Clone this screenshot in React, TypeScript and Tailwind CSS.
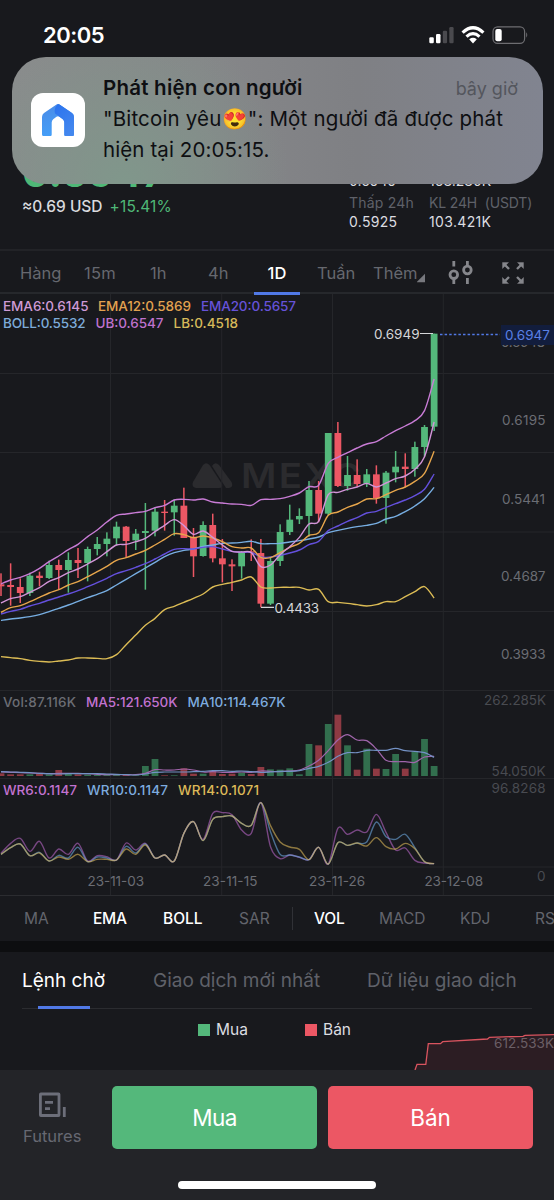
import React from 'react';
import clsx from 'clsx';

// [direction, high, body top, body bottom, low], in thirds of a pixel below y = 450
type Candle = ['u' | 'd', number, number, number, number];

const candles: Candle[] = [
  ['d', 370, 403, 409, 438],
  ['d', 340, 405, 411, 467],
  ['d', 385, 411, 429, 459],
  ['u', 368, 377, 429, 438],
  ['d', 365, 377, 384, 409],
  ['u', 332, 345, 384, 387],
  ['d', 329, 345, 360, 417],
  ['u', 307, 330, 360, 428],
  ['d', 294, 330, 339, 384],
  ['u', 290, 297, 339, 394],
  ['u', 261, 282, 297, 316],
  ['u', 247, 266, 282, 319],
  ['u', 215, 230, 265, 285],
  ['d', 228, 230, 273, 321],
  ['u', 237, 251, 271, 300],
  ['u', 159, 243, 249, 419],
  ['u', 172, 185, 242, 259],
  ['d', 150, 185, 189, 242],
  ['u', 148, 167, 187, 257],
  ['d', 113, 167, 264, 264],
  ['d', 234, 261, 319, 381],
  ['u', 214, 225, 318, 320],
  ['d', 191, 225, 325, 337],
  ['d', 267, 325, 343, 397],
  ['d', 328, 343, 349, 423],
  ['u', 303, 306, 349, 386],
  ['d', 268, 304, 308, 333],
  ['d', 267, 309, 461, 472],
  ['u', 322, 333, 461, 465],
  ['u', 223, 246, 333, 348],
  ['u', 164, 209, 246, 255],
  ['u', 175, 198, 208, 222],
  ['u', 93, 120, 198, 260],
  ['d', 93, 120, 191, 217],
  ['u', -51, -51, 191, 195],
  ['d', -84, -51, 108, 111],
  ['u', 18, 75, 108, 122],
  ['d', 28, 75, 102, 110],
  ['u', 57, 73, 101, 111],
  ['d', 46, 73, 145, 161],
  ['u', 63, 68, 144, 221],
  ['u', 3, 50, 67, 97],
  ['d', 10, 50, 57, 112],
  ['u', -25, -9, 57, 80],
  ['u', -75, -69, -9, 20],
  ['u', -349, -349, -70, -57],
];

const priceLines = [
  {
    name: 'LB',
    color: '#dcbc55',
    values: [620, 623, 626, 631, 634, 636, 633, 630, 624, 624, 625, 626, 614, 584, 555, 526, 505, 479, 469, 457, 445, 432, 411, 403, 397, 390, 381, 411, 414, 412, 412, 412, 420, 418, 455, 457, 460, 464, 468, 464, 455, 455, 440, 425, 410, 444],
  },
  {
    name: 'UB',
    color: '#c97cd6',
    values: [402, 390, 382, 371, 355, 335, 318, 299, 283, 260, 240, 216, 196, 192, 188, 184, 173, 166, 150, 148, 150, 147, 156, 159, 162, 163, 166, 149, 148, 146, 139, 129, 110, 106, 40, 22, 8, -6, -18, -25, -42, -58, -72, -88, -118, -213],
  },
  {
    name: 'BOLL',
    color: '#77aee2',
    values: [511, 507, 504, 500, 494, 485, 475, 465, 454, 443, 433, 422, 405, 388, 371, 354, 337, 320, 308, 301, 297, 289, 285, 280, 279, 277, 274, 281, 281, 280, 276, 272, 267, 261, 248, 241, 235, 230, 226, 220, 207, 199, 185, 168, 146, 112],
  },
  {
    name: 'EMA20',
    color: '#6450dd',
    values: [492, 484, 478, 468, 460, 450, 441, 432, 422, 410, 398, 385, 371, 362, 352, 341, 327, 312, 298, 296, 297, 292, 290, 297, 304, 307, 307, 321, 321, 316, 309, 300, 284, 274, 242, 228, 214, 203, 189, 184, 172, 161, 150, 137, 118, 72],
  },
  {
    name: 'EMA12',
    color: '#e7a64c',
    values: [487, 473, 467, 455, 442, 429, 419, 405, 395, 380, 365, 349, 331, 323, 312, 301, 285, 268, 251, 254, 263, 258, 264, 275, 290, 294, 294, 322, 323, 308, 292, 280, 256, 248, 196, 186, 172, 162, 147, 146, 134, 121, 111, 94, 70, 4],
  },
  {
    name: 'EMA6',
    color: '#d294d8',
    values: [459, 446, 440, 427, 413, 394, 383, 368, 357, 342, 326, 305, 285, 283, 275, 265, 245, 226, 209, 227, 253, 243, 262, 285, 304, 306, 308, 350, 345, 314, 290, 262, 222, 214, 134, 127, 118, 111, 100, 111, 99, 86, 78, 58, 20, -84],
  },
];

// Volume bar tops and the lower studies, in thirds of a pixel below y = 680
const volumeTops = [
  280, 283, 283, 283, 282, 283, 270, 281, 283, 284, 285, 285, 285, 284, 286, 258, 237, 286, 286, 265, 281, 281, 273, 282, 281, 278, 282, 261, 268, 269, 265, 283, 192, 196, 132, 104, 196, 269, 206, 266, 267, 222, 266, 216, 177, 258,
];

const volumeLines = [
  {
    name: 'MA5',
    color: '#a065ab',
    values: [276, 277, 278, 279, 280, 281, 280, 280, 280, 281, 283, 284, 284, 284, 284, 280, 269, 270, 270, 267, 270, 276, 275, 277, 277, 276, 277, 273, 274, 275, 273, 270, 258, 241, 212, 180, 164, 180, 182, 207, 241, 245, 245, 247, 231, 229],
  },
  {
    name: 'MA10',
    color: '#7391c4',
    values: [275, 276, 277, 278, 280, 281, 282, 281, 281, 281, 281, 282, 283, 284, 285, 282, 277, 276, 276, 276, 275, 274, 272, 272, 274, 273, 275, 277, 276, 274, 274, 272, 265, 259, 247, 229, 218, 218, 211, 211, 211, 205, 212, 214, 218, 232],
  },
];

const wrLines = [
  {
    name: 'WR6',
    color: '#b765c6',
    values: [520, 490, 475, 514, 484, 534, 507, 523, 490, 543, 527, 530, 540, 489, 510, 490, 534, 525, 543, 460, 425, 478, 400, 398, 404, 450, 460, 368, 500, 536, 525, 532, 539, 502, 552, 445, 463, 450, 456, 403, 457, 510, 504, 541, 549, 551],
  },
  {
    name: 'WR10',
    color: '#6da8e0',
    values: [523, 503, 492, 527, 517, 543, 526, 534, 502, 545, 531, 534, 540, 499, 519, 492, 534, 525, 543, 460, 425, 482, 418, 410, 408, 430, 436, 368, 455, 523, 525, 531, 539, 502, 552, 488, 496, 489, 486, 426, 470, 478, 463, 503, 545, 551],
  },
  {
    name: 'WR14',
    color: '#dcb858',
    values: [523, 503, 492, 527, 519, 543, 531, 538, 523, 545, 538, 538, 540, 507, 523, 495, 534, 525, 543, 460, 425, 482, 418, 410, 408, 430, 436, 368, 437, 486, 501, 508, 539, 502, 552, 488, 496, 489, 498, 473, 500, 507, 490, 506, 545, 551],
  },
];

interface ChartLabel {
  text: string;
  x: number;
  y: number;
  width: number;
  color: string;
  bold?: boolean;
}

const legendLabels: ChartLabel[] = [
  { text: 'EMA6:0.6145', x: 3, y: 310.7, width: 85.5, color: '#cf9bd6', bold: true },
  { text: 'EMA12:0.5869', x: 98, y: 310.7, width: 93, color: '#e2a250', bold: true },
  { text: 'EMA20:0.5657', x: 201, y: 310.7, width: 95, color: '#6652d8', bold: true },
  { text: 'BOLL:0.5532', x: 3, y: 327.7, width: 82.5, color: '#7dabd9', bold: true },
  { text: 'UB:0.6547', x: 95.5, y: 327.7, width: 68, color: '#bf72cc', bold: true },
  { text: 'LB:0.4518', x: 173.5, y: 327.7, width: 64.5, color: '#d6b95a', bold: true },
  { text: 'Vol:87.116K', x: 3, y: 707, width: 73, color: '#6b6d74', bold: true },
  { text: 'MA5:121.650K', x: 86, y: 707, width: 91.5, color: '#c272d0', bold: true },
  { text: 'MA10:114.467K', x: 187.5, y: 707, width: 98, color: '#7dabdf', bold: true },
  { text: 'WR6:0.1147', x: 3, y: 795, width: 74, color: '#c272d0', bold: true },
  { text: 'WR10:0.1147', x: 87, y: 795, width: 81, color: '#7dabdf', bold: true },
  { text: 'WR14:0.1071', x: 178, y: 795, width: 81, color: '#dcb858', bold: true },
];

const axisLabels: ChartLabel[] = [
  { text: '0.6948', x: 501, y: 347, width: 44, color: '#6b6d74' },
  { text: '0.6195', x: 502, y: 425.3, width: 43.5, color: '#6b6d74' },
  { text: '0.5441', x: 502, y: 503.5, width: 43, color: '#6b6d74' },
  { text: '0.4687', x: 501, y: 581.3, width: 44.5, color: '#6b6d74' },
  { text: '0.3933', x: 501, y: 659.3, width: 44.5, color: '#6b6d74' },
  { text: '262.285K', x: 484, y: 704.5, width: 62, color: '#494b51' },
  { text: '54.050K', x: 491.5, y: 775.7, width: 54, color: '#494b51' },
  { text: '96.8268', x: 491.5, y: 792.8, width: 54, color: '#494b51' },
  { text: '0', x: 537, y: 881, width: 8, color: '#494b51' },
  { text: '23-11-03', x: 87.5, y: 886, width: 56.5, color: '#6b6d74' },
  { text: '23-11-15', x: 203, y: 886, width: 54.5, color: '#6b6d74' },
  { text: '23-11-26', x: 309, y: 886, width: 56, color: '#6b6d74' },
  { text: '23-12-08', x: 424.5, y: 886, width: 58.5, color: '#6b6d74' },
];

const xAt = (index: number) => 1 + index * 9.625;

// Catmull-Rom spline through one value per candle
const smoothPath = (values: number[], base: number): string => {
  const pts = values.map((v, i) => [xAt(i), base + v / 3]);
  let d = `M${pts[0][0]} ${pts[0][1]}`;
  for (let i = 0; i < pts.length - 1; i++) {
    const p0 = pts[i - 1] || pts[i];
    const p1 = pts[i];
    const p2 = pts[i + 1];
    const p3 = pts[i + 2] || p2;
    d += `C${p1[0] + (p2[0] - p0[0]) / 6} ${p1[1] + (p2[1] - p0[1]) / 6} ${p2[0] - (p3[0] - p1[0]) / 6} ${p2[1] - (p3[1] - p1[1]) / 6} ${p2[0]} ${p2[1]}`;
  }
  return d;
};

const ChartText: React.FC<ChartLabel> = ({ text, x, y, width, color, bold }) => (
  <text x={x} y={y} fill={color} textLength={width} className={clsx('text-[13.5px]', bold && 'font-medium')}>
    {text}
  </text>
);

const StatusBar = () => (
  <div className="flex h-[57px] shrink-0 items-start pt-[21px] pl-[43px]">
    <div className="w-[386px] text-[22px] leading-7 font-semibold tracking-[-0.5px] text-white">20:05</div>
    <svg className="mt-1" width="100" height="20" viewBox="429 25 100 20" fill="#fff">
      <rect x="429.3" y="37.3" width="4.5" height="6" rx="1.2" />
      <rect x="436" y="34" width="4.5" height="9.3" rx="1.2" />
      <rect x="442.8" y="30.7" width="4.3" height="12.6" rx="1.2" fill="#4a4a4e" />
      <rect x="449.3" y="27" width="4.3" height="16.3" rx="1.2" fill="#4a4a4e" />
      <g fill="none" stroke="#fff" strokeWidth="3.2">
        <path d="M462.6 32.6 Q473 22.9 483.4 32.6" />
        <path d="M466.5 36.6 Q473 30.8 479.5 36.6" />
      </g>
      <path d="M469.2 39.3 Q473 36.4 476.8 39.3 L473 43.4Z" />
      <rect x="493" y="26.8" width="31.6" height="16.6" rx="4.6" fill="none" stroke="#6d6d71" strokeWidth="1.2" />
      <rect x="495.3" y="29" width="6.4" height="12.2" rx="2" />
      <path d="M526.2 32.3 Q528.3 35 526.2 37.8Z" fill="#6d6d71" />
    </svg>
  </div>
);

const Notification = () => (
  <div className="absolute top-[57px] left-[12px] flex h-[127px] w-[531px] rounded-[34px] bg-[radial-gradient(circle_at_21%_100%,#80978b_0%,#80978b00_38%),linear-gradient(90deg,#8a8b8c_0%,#868789_35%,#7f8084_65%,#818490_100%)] pl-[19px]">
    <div className="mt-[36px] flex h-[54px] w-[54px] items-center justify-center rounded-[12px] bg-white">
      <svg width="34" height="34" viewBox="0 0 34 34">
        <defs>
          <linearGradient id="house" x1="0" y1="0" x2="0.3" y2="1">
            <stop offset="0" stopColor="#4a8ae6" />
            <stop offset="1" stopColor="#459ff8" />
          </linearGradient>
          <linearGradient id="roof" x1="0" y1="0" x2="0.6" y2="1">
            <stop offset="0" stopColor="#2a72ee" />
            <stop offset="1" stopColor="#4387ee" />
          </linearGradient>
        </defs>
        <path
          d="M15.5 1.6 Q17 0.5 18.5 1.6 L31 10 Q33 11.4 33 14 V31.5 Q33 33 31.5 33 H24.5 Q23.3 33 23.3 31.8 V19.5 Q23.3 17.5 21.8 16.3 L18.5 13.8 Q17 12.9 15.5 13.8 L12.2 16.3 Q10.7 17.5 10.7 19.5 V31.8 Q10.7 33 9.5 33 H2.5 Q1 33 1 31.5 V14 Q1 11.4 3 10Z"
          fill="url(#house)"
        />
        <path
          d="M17 1.1 Q17.8 1.1 18.5 1.6 L31 10 Q33 11.4 33 14 V31.5 Q33 33 31.5 33 H24.5 Q23.3 33 23.3 31.8 V19.5 Q23.3 17.5 21.8 16.3 L14 10.5 Q12.5 5 17 1.1Z"
          fill="url(#roof)"
        />
      </svg>
    </div>
    <div className="ml-[18px] w-[420px] pt-[15px] text-[#0e0f12]">
      <div className="flex justify-between pr-[5px]">
        <span className="text-[20.5px] leading-[31px] font-semibold tracking-[0.23px]">Phát hiện con người</span>
        <span className="text-[18px] leading-[34px] text-[#54565d]">bây giờ</span>
      </div>
      <div className="-mt-[3px] text-[20.5px] leading-[31px] whitespace-nowrap">
        <div className="tracking-[0.17px]">"Bitcoin yêu😍": Một người đã được phát</div>
        <div className="tracking-[0.1px]">hiện tại 20:05:15.</div>
      </div>
    </div>
  </div>
);

const PriceHeader = () => (
  <div className="flex h-[194px] shrink-0 border-b-2 border-[#222327] pl-[22px]">
    <div className="w-[327px] pt-[88px]">
      <div className="h-[50px] text-[41px] leading-[54px] font-bold text-[#4fb877]">0.6947</div>
      <div className="flex gap-[7px] pt-px text-[15.5px] leading-[22px]">
        <span className="font-medium text-[#d9dade]">≈0.69 USD</span>
        <span className="tracking-[0.15px] text-[#4fb877]">+15.41%</span>
      </div>
    </div>
    <div className="flex pt-[115px] text-[14px] leading-[18px] whitespace-nowrap text-[#dcdde1]">
      <div className="w-[80px]">
        <div className="h-[22px]">0.6949</div>
        <div className="tracking-[0.2px] text-[#5f6169]">Thấp 24h</div>
        <div className="pt-px tracking-[0.3px]">0.5925</div>
      </div>
      <div>
        <div className="h-[22px]">163.230K</div>
        <div className="tracking-[-0.15px] text-[#5f6169]">KL 24H&nbsp; (USDT)</div>
        <div className="pt-px tracking-[0.35px]">103.421K</div>
      </div>
    </div>
  </div>
);

const IntervalTabs = () => (
  <div className="flex h-[43px] shrink-0 items-stretch border-b-2 border-[#26282c] text-[16.5px] leading-[44px] whitespace-nowrap text-[#66686f]">
    <div className="w-[84px] pl-[20px]">Hàng</div>
    <div className="w-[66px] tracking-[0.2px]">15m</div>
    <div className="w-[58px]">1h</div>
    <div className="w-[46px]">4h</div>
    <div className="-mb-[2px] h-[44px] w-[46px] border-b-[3px] border-[#5179e6] text-center font-medium text-white">1D</div>
    <div className="w-[73px] pl-[17px]">Tuần</div>
    <div className="w-[44px]">Thêm</div>
    <div className="flex grow items-center">
      <svg width="108" height="30" viewBox="417 257 108 30">
        <path d="M425 273.8V282.3H416.5Z" fill="#77787e" />
        <g fill="none" stroke="#85868b" strokeWidth="2.8">
          <circle cx="453.8" cy="274.7" r="3.8" />
          <circle cx="467.4" cy="270" r="3.8" />
          <path d="M453.8 261v5.5M453.8 279v5M467.4 261v5M467.4 278v6" />
        </g>
        <g fill="#85868b" stroke="#85868b">
          <path d="M504 264l5 5M522 264l-5 5M504 282l5-5M522 282l-5-5" strokeWidth="2.4" />
          <path d="M502.5 262.5h6l-6 6zM523.5 262.5h-6l6 6zM502.5 283.5h6l-6-6zM523.5 283.5h-6l6-6z" strokeWidth="0.4" />
        </g>
      </svg>
    </div>
  </div>
);

const PriceChart = () => (
  <svg className="shrink-0" width="554" height="602" viewBox="0 294 554 602">
    {/* Watermark */}
    <g fill="#2b2b2e">
      <path d="M193 482 L203 465 Q206 461.5 209.5 465 L222 484 Q223 488 219 488 H196 Q191 487 193 482Z" />
      <path d="M212 466 Q215 461 219 465 L231.5 482 Q234 487 229 488 H226 L212 466Z" />
      <text x="241" y="487.5" textLength="122" lengthAdjust="spacingAndGlyphs" className="text-[34px] font-semibold tracking-[2px]">
        MEXC
      </text>
    </g>

    {/* Grid */}
    <g stroke="#25262a" strokeWidth="1">
      {[373.5, 452.5, 532, 611.5, 690.5, 778.5, 867].map((y) => (
        <path key={y} d={`M0 ${y}H554`} />
      ))}
      {[110.5, 221.7, 332.5, 443.3].map((x) => (
        <path key={x} d={`M${x} 294V896`} />
      ))}
    </g>
    <path d="M0 895.7H554" stroke="#2b2c30" strokeWidth="1.5" />

    {/* Candles */}
    {candles.map(([dir, high, top, bottom, low], i) => (
      <g key={i} fill={dir === 'u' ? '#54b87b' : '#ec5764'}>
        <rect x={xAt(i) - 0.75} y={450 + high / 3} width="1.5" height={(low - high) / 3} />
        <rect x={xAt(i) - 3.4} y={450 + top / 3} width="6.8" height={(bottom - top) / 3} />
      </g>
    ))}
    {priceLines.map((line) => (
      <path key={line.name} d={smoothPath(line.values, 450)} fill="none" stroke={line.color} strokeWidth="1.4" />
    ))}

    {/* Volume */}
    {volumeTops.map((top, i) => (
      <rect
        key={i}
        x={xAt(i) - 3.4}
        y={680 + top / 3}
        width="6.8"
        height={(288 - top) / 3}
        fill={candles[i][0] === 'u' ? '#326f4e' : '#8e3a43'}
      />
    ))}
    {volumeLines.map((line) => (
      <path key={line.name} d={smoothPath(line.values, 680)} fill="none" stroke={line.color} strokeWidth="1.2" />
    ))}

    {/* Williams %R */}
    {wrLines.map((line) => (
      <path key={line.name} d={smoothPath(line.values, 680)} fill="none" stroke={line.color} strokeWidth="1.4" opacity="0.6" />
    ))}

    {legendLabels.map((label) => (
      <ChartText key={label.text} {...label} />
    ))}
    {axisLabels.map((label) => (
      <ChartText key={label.text} {...label} />
    ))}

    {/* High, low and last price */}
    <path d="M420 333.5H433M261 607.3H274" stroke="#d5d6d9" strokeWidth="1.2" />
    <ChartText text="0.6949" x={374} y={339} width={45.5} color="#d5d6d9" />
    <ChartText text="0.4433" x={274.5} y={612.8} width={44.5} color="#d5d6d9" />
    <path d="M440 334.5H500" stroke="#5179e6" strokeWidth="1.3" strokeDasharray="2.5 2.1" />
    <rect x="501" y="325" width="53" height="20" fill="#121d3d" />
    <ChartText text="0.6947" x={505} y={340} width={45} color="#5a80e6" />
  </svg>
);

const IndicatorBar = () => (
  <div className="flex h-[45px] shrink-0 items-center overflow-hidden text-[15.5px] whitespace-nowrap text-[#63656d]">
    <div className="w-[93px] shrink-0 pl-[24px]">MA</div>
    <div className="w-[70px] shrink-0 font-medium tracking-[-0.3px] text-white">EMA</div>
    <div className="w-[76px] shrink-0 font-medium text-white">BOLL</div>
    <div className="w-[53px] shrink-0">SAR</div>
    <div className="h-[23px] w-[22px] shrink-0 border-l border-[#303136]" />
    <div className="w-[65px] shrink-0 font-medium tracking-[-0.2px] text-white">VOL</div>
    <div className="w-[81px] shrink-0 tracking-[-0.1px]">MACD</div>
    <div className="w-[75px] shrink-0">KDJ</div>
    <div className="shrink-0">RSI</div>
  </div>
);

const OrderTabs = () => (
  <div className="mx-[22px] flex h-[57px] shrink-0 border-b border-[#2b2c30] text-[19px] leading-[58px] whitespace-nowrap text-[#5f6169]">
    <div className="flex w-[131px] flex-col text-white">
      <div className="h-[54px]">Lệnh chờ</div>
      <div className="ml-[16px] h-[3px] w-[52px] shrink-0 bg-[#5179e6]" />
    </div>
    <div className="w-[214px]">Giao dịch mới nhất</div>
    <div>Dữ liệu giao dịch</div>
  </div>
);

const DepthChart = () => (
  <div className="relative h-[61px] shrink-0">
    <div className="flex pt-[11px] pl-[198px] text-[15.5px] leading-[20px] text-[#dcdde1]">
      <div className="flex w-[107px] items-center gap-[6px]">
        <span className="h-[12px] w-[12px] bg-[#54b87b]" />
        Mua
      </div>
      <div className="flex items-center gap-[6px]">
        <span className="h-[12px] w-[12px] bg-[#ec5764]" />
        Bán
      </div>
    </div>
    <svg className="absolute top-0 left-[410px]" width="144" height="61" viewBox="410 1009 144 61">
      <path d="M415 1070L417 1064.3H425.8L428.3 1043.7H440.5L442.7 1041.7L487.5 1039L489.5 1037.3L523 1036.3L525 1035.3L554 1034.7V1070Z" fill="#2c1d23" />
      <path d="M415 1070L417 1064.3H425.8L428.3 1043.7H440.5L442.7 1041.7L487.5 1039L489.5 1037.3L523 1036.3L525 1035.3L554 1034.7" fill="none" stroke="#d9545f" strokeWidth="1.3" />
      <ChartText text="612.533K" x={494} y={1048.3} width={60} color="#6b5f66" />
    </svg>
  </div>
);

const TradeBar = () => (
  <div className="flex grow flex-col items-center bg-[#232428]">
    <div className="flex w-full pt-[16px] pl-[23px]">
      <div className="w-[89px] text-[16.5px] leading-[22px] text-[#666872]">
        <svg className="mt-[5px] ml-[15px]" width="29" height="28" viewBox="38 1091 29 28">
          <rect x="40.4" y="1094" width="18.6" height="21.5" rx="0.5" fill="none" stroke="#6c6e79" strokeWidth="2.8" />
          <path d="M45 1102.3h8M45 1108.7h5" stroke="#6c6e79" strokeWidth="2.8" />
          <path d="M64.3 1107v10" stroke="#6c6e79" strokeWidth="2.8" />
        </svg>
        <div className="mt-[6px]">Futures</div>
      </div>
      <div className="flex gap-[11px] text-[22.5px] text-white">
        <button className="h-[63px] w-[205px] rounded-[5px] bg-[#54b87b] tracking-[-0.6px]">Mua</button>
        <button className="h-[63px] w-[205px] rounded-[5px] bg-[#ec5764]">Bán</button>
      </div>
    </div>
    <div className="mt-[32px] h-[8px] w-[198px] rounded-full bg-white" />
  </div>
);

const App = () => (
  <div className="relative flex h-[1200px] w-[554px] flex-col overflow-hidden bg-[#18191d] font-['Inter','Noto_Sans',sans-serif]">
    <StatusBar />
    <PriceHeader />
    <IntervalTabs />
    <PriceChart />
    <IndicatorBar />
    <div className="h-[11px] shrink-0 bg-[#0d0e10]" />
    <OrderTabs />
    <DepthChart />
    <TradeBar />
    <Notification />
  </div>
);

export default App;
